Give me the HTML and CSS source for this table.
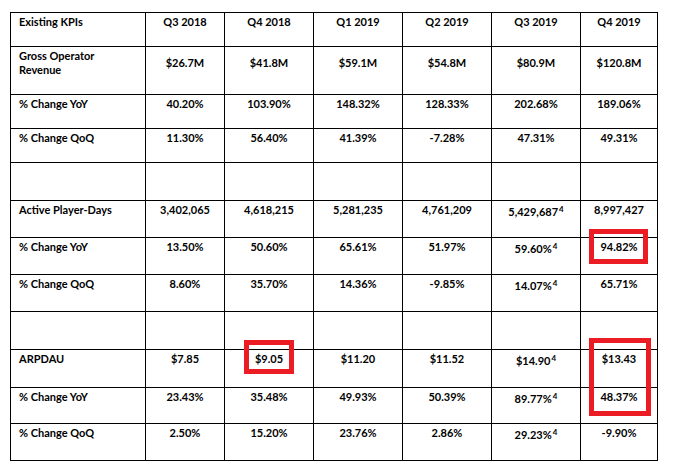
FILE: index.html
```html
<!DOCTYPE html>
<html>
<head>
<meta charset="utf-8">
<link rel="stylesheet" href="styles.css">
</head>
<body>
<div class="sheet">
  <div class="grid">
    <div class="cell label">Existing KPIs</div>
    <div class="cell num">Q3 2018</div>
    <div class="cell num">Q4 2018</div>
    <div class="cell num">Q1 2019</div>
    <div class="cell num">Q2 2019</div>
    <div class="cell num">Q3 2019</div>
    <div class="cell num">Q4 2019</div>

    <div class="cell label">Gross Operator<br>Revenue</div>
    <div class="cell num low">$26.7M</div>
    <div class="cell num low">$41.8M</div>
    <div class="cell num low">$59.1M</div>
    <div class="cell num low">$54.8M</div>
    <div class="cell num low">$80.9M</div>
    <div class="cell num low">$120.8M</div>

    <div class="cell label">% Change YoY</div>
    <div class="cell num">40.20%</div>
    <div class="cell num">103.90%</div>
    <div class="cell num">148.32%</div>
    <div class="cell num">128.33%</div>
    <div class="cell num">202.68%</div>
    <div class="cell num">189.06%</div>

    <div class="cell label">% Change QoQ</div>
    <div class="cell num">11.30%</div>
    <div class="cell num">56.40%</div>
    <div class="cell num">41.39%</div>
    <div class="cell num">-7.28%</div>
    <div class="cell num">47.31%</div>
    <div class="cell num">49.31%</div>

    <div class="cell"></div><div class="cell"></div><div class="cell"></div><div class="cell"></div><div class="cell"></div><div class="cell"></div><div class="cell"></div>

    <div class="cell label">Active Player-Days</div>
    <div class="cell num">3,402,065</div>
    <div class="cell num">4,618,215</div>
    <div class="cell num">5,281,235</div>
    <div class="cell num">4,761,209</div>
    <div class="cell num fn">5,429,687<sup>4</sup></div>
    <div class="cell num">8,997,427</div>

    <div class="cell label">% Change YoY</div>
    <div class="cell num">13.50%</div>
    <div class="cell num">50.60%</div>
    <div class="cell num">65.61%</div>
    <div class="cell num">51.97%</div>
    <div class="cell num fn">59.60%<sup>4</sup></div>
    <div class="cell num">94.82%</div>

    <div class="cell label">% Change QoQ</div>
    <div class="cell num">8.60%</div>
    <div class="cell num">35.70%</div>
    <div class="cell num">14.36%</div>
    <div class="cell num">-9.85%</div>
    <div class="cell num fn">14.07%<sup>4</sup></div>
    <div class="cell num">65.71%</div>

    <div class="cell"></div><div class="cell"></div><div class="cell"></div><div class="cell"></div><div class="cell"></div><div class="cell"></div><div class="cell"></div>

    <div class="cell label">ARPDAU</div>
    <div class="cell num">$7.85</div>
    <div class="cell num">$9.05</div>
    <div class="cell num">$11.20</div>
    <div class="cell num">$11.52</div>
    <div class="cell num fn">$14.90<sup>4</sup></div>
    <div class="cell num">$13.43</div>

    <div class="cell label">% Change YoY</div>
    <div class="cell num">23.43%</div>
    <div class="cell num">35.48%</div>
    <div class="cell num">49.93%</div>
    <div class="cell num">50.39%</div>
    <div class="cell num fn">89.77%<sup>4</sup></div>
    <div class="cell num">48.37%</div>

    <div class="cell label">% Change QoQ</div>
    <div class="cell num">2.50%</div>
    <div class="cell num">15.20%</div>
    <div class="cell num">23.76%</div>
    <div class="cell num">2.86%</div>
    <div class="cell num fn">29.23%<sup>4</sup></div>
    <div class="cell num">-9.90%</div>
  </div>
  <div class="mark mark-yoy"></div>
  <div class="mark mark-arpdau"></div>
  <div class="mark mark-q4"></div>
</div>
</body>
</html>
```

FILE: styles.css
```css
html, body {
  margin: 0;
  padding: 0;
  background: #fff;
}

.sheet {
  position: relative;
  width: 648px;
  margin: 12px 0 0 10px;
}

.grid {
  display: grid;
  grid-template-columns: 134px 78px 88px 88px 88px 88px 76px;
  grid-template-rows: 33px 47px 33px 33px 37px 36px 36px 36px 37px 37px 35px 36px;
  gap: 1px;
  background: #000;
  border: 1px solid #000;
}

.cell {
  background: #fff;
  color: #000;
  font-family: Lato, "Liberation Sans", sans-serif;
  font-weight: 700;
  font-size: 11px;
  line-height: 14px;
  padding: 2px 8px 0;
  white-space: nowrap;
}

.num {
  text-align: center;
  padding-left: 2px;
  padding-right: 2px;
}

.low {
  padding-top: 9px;
}

.fn {
  padding-top: 4px;
}

.fn sup {
  font-size: 8px;
  line-height: 0;
  vertical-align: 4px;
  margin-left: 1px;
}

.mark {
  position: absolute;
  border: 5px solid #ec1c24;
  box-sizing: border-box;
}

.mark-yoy {
  left: 579px;
  top: 217px;
  width: 59px;
  height: 35px;
}

.mark-arpdau {
  left: 234px;
  top: 328px;
  width: 50px;
  height: 34px;
}

.mark-q4 {
  left: 579px;
  top: 326px;
  width: 62px;
  height: 78px;
}
```
